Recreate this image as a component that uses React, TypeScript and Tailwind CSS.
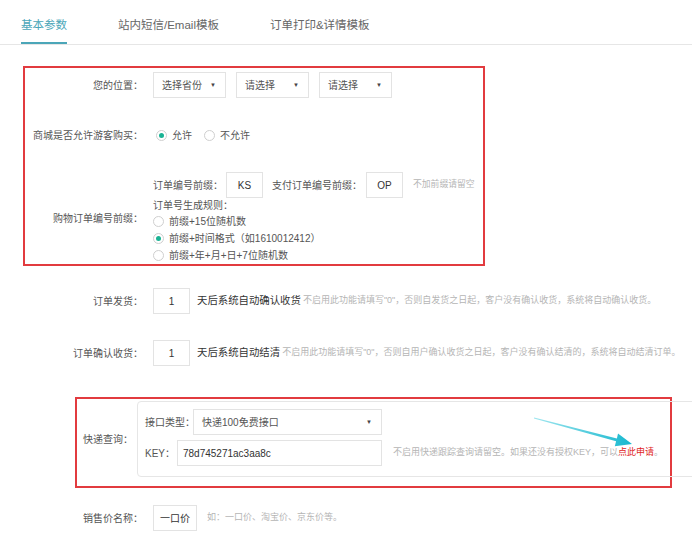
import React from 'react';

const FONT = "font-['Liberation_Sans','Noto_Sans_CJK_SC',sans-serif]";

function Select({ label, width }: { label: string; width: string }) {
  return (
    <div
      className={`${width} h-[26px] shrink-0 border border-[#e3e3e3] bg-white flex items-center justify-between pl-[8px] pr-[9px] text-[10px] text-[#555]`}
    >
      <span>{label}</span>
      <span className="text-[6px] text-[#444]">▼</span>
    </div>
  );
}

function Radio({ checked, label, gap = 'ml-[5px]' }: { checked?: boolean; label: string; gap?: string }) {
  return (
    <div className="flex items-center">
      <span className="w-[11px] h-[11px] rounded-full border border-[#cfcfcf] bg-white flex items-center justify-center">
        {checked && <span className="w-[5px] h-[5px] rounded-full bg-[#1ab394]" />}
      </span>
      <span className={`${gap} text-[10px] text-[#555]`}>{label}</span>
    </div>
  );
}

function Box({ value, width, left }: { value: string; width: string; left?: boolean }) {
  return (
    <div
      className={`${width} h-[26px] shrink-0 border border-[#e3e3e3] bg-white flex items-center ${
        left ? 'pl-[5px]' : 'justify-center'
      } text-[10px] text-[#333]`}
    >
      {value}
    </div>
  );
}

export default function App() {
  const tabs = ['基本参数', '站内短信/Email模板', '订单打印&详情模板'];

  return (
    <div className={`${FONT} relative w-[692px] h-[541px] overflow-hidden bg-white`}>
      {/* tabs */}
      <div className="flex h-[45px] border-b border-[#e6e6e6] pl-[21px] gap-[51px]">
        {tabs.map((t, i) => (
          <div
            key={t}
            className={`h-[44px] pt-[16px] text-[11.5px] leading-[18px] ${
              i === 0 ? 'text-[#4ba6b8] border-b-2 border-[#4ba6b8]' : 'text-[#666]'
            }`}
          >
            {t}
          </div>
        ))}
      </div>

      {/* box 1 */}
      <div className="mt-[21px] ml-[23px] w-[462px] h-[200px] border-2 border-[#e23b3f]">
        <div className="mt-[4px] flex items-center h-[26px]">
          <div className="w-[118px] text-right text-[10px] text-[#555]">您的位置：</div>
          <div className="ml-[10px] flex gap-[10px]">
            <Select label="选择省份" width="w-[73px]" />
            <Select label="请选择" width="w-[73px]" />
            <Select label="请选择" width="w-[73px]" />
          </div>
        </div>

        <div className="mt-[24px] flex items-center h-[26px]">
          <div className="w-[118px] text-right text-[10px] text-[#555]">商城是否允许游客购买：</div>
          <div className="ml-[13px] flex items-center gap-[12px]">
            <Radio checked label="允许" />
            <Radio label="不允许" />
          </div>
        </div>

        <div className="mt-[24px] flex items-center">
          <div className="w-[118px] text-right text-[10px] text-[#555]">购物订单编号前缀：</div>
          <div className="ml-[10px] flex flex-col">
            <div className="flex items-center h-[26px]">
              <span className="w-[73px] text-[10px] text-[#555]">订单编号前缀：</span>
              <Box value="KS" width="w-[37px]" />
              <span className="ml-[9px] w-[94px] text-[10px] text-[#555]">支付订单编号前缀：</span>
              <Box value="OP" width="w-[37px]" />
              <span className="ml-[10px] text-[8.8px] text-[#b5b5b5]">不加前缀请留空</span>
            </div>
            <div className="h-[15px] leading-[15px] text-[10px] text-[#555]">订单号生成规则：</div>
            <div className="h-[17px] flex items-center">
              <Radio label="前缀+15位随机数" />
            </div>
            <div className="h-[17px] flex items-center">
              <Radio checked label="前缀+时间格式（如1610012412）" />
            </div>
            <div className="h-[17px] flex items-center">
              <Radio label="前缀+年+月+日+7位随机数" />
            </div>
          </div>
        </div>
      </div>

      {/* auto receive */}
      <div className="mt-[22px] flex items-center h-[26px]">
        <div className="w-[143px] text-right text-[10px] text-[#555]">订单发货：</div>
        <div className="ml-[10px] flex items-center">
          <Box value="1" width="w-[37px]" />
          <span className="ml-[7px] text-[10.4px] text-[#333]">天后系统自动确认收货</span>
          <span className="ml-[2px] text-[9px] text-[#b5b5b5] whitespace-nowrap">
            不启用此功能请填写"0"，否则自发货之日起，客户没有确认收货，系统将自动确认收货。
          </span>
        </div>
      </div>

      <div className="mt-[26px] flex items-center h-[26px]">
        <div className="w-[143px] text-right text-[10px] text-[#555]">订单确认收货：</div>
        <div className="ml-[10px] flex items-center">
          <Box value="1" width="w-[37px]" />
          <span className="ml-[7px] text-[10.4px] text-[#333]">天后系统自动结清</span>
          <span className="ml-[2px] text-[9px] text-[#b5b5b5] whitespace-nowrap">
            不启用此功能请填写"0"，否则自用户确认收货之日起，客户没有确认结清的，系统将自动结清订单。
          </span>
        </div>
      </div>

      {/* box 2 */}
      <div className="mt-[31px] ml-[75px] w-[597px] h-[91px] border-2 border-[#e23b3f] relative z-10">
        <div className="mt-[2px] flex items-center">
          <div className="w-[56px] shrink-0 whitespace-nowrap text-right text-[10px] text-[#555]">快递查询：</div>
          <div className="ml-[4px] w-[580px] shrink-0 h-[76px] border border-[#e6e6e6] rounded-[4px] pl-[7px] pt-[7px] -z-10 relative">
            <div className="flex items-center h-[26px]">
              <span className="w-[48px] shrink-0 text-[10px] text-[#555] whitespace-nowrap">接口类型：</span>
              <Select label="快递100免费接口" width="w-[189px]" />
            </div>
            <div className="mt-[5px] flex items-center h-[26px]">
              <span className="w-[32px] shrink-0 text-[10px] text-[#555] whitespace-nowrap">KEY：</span>
              <Box value="78d745271ac3aa8c" width="w-[205px]" left />
              <span className="ml-[11px] text-[9px] text-[#b5b5b5] whitespace-nowrap">
                不启用快递跟踪查询请留空。如果还没有授权KEY，可以
                <span className="text-[#e02424]">点此申请</span>。
              </span>
            </div>
          </div>
        </div>
      </div>

      {/* sale price name */}
      <div className="mt-[17px] flex items-center h-[26px]">
        <div className="w-[143px] text-right text-[10px] text-[#555]">销售价名称：</div>
        <div className="ml-[10px] flex items-center">
          <Box value="一口价" width="w-[44px]" />
          <span className="ml-[10px] text-[9px] text-[#b5b5b5]">如：一口价、淘宝价、京东价等。</span>
        </div>
      </div>

      {/* annotation arrow */}
      <svg
        className="absolute left-[527px] top-[410px] z-20"
        width="115"
        height="40"
        viewBox="0 0 115 40"
      >
        <defs>
          <linearGradient id="arr" x1="0" y1="0" x2="1" y2="0">
            <stop offset="0" stopColor="#9fe6ef" />
            <stop offset="1" stopColor="#17b8cf" />
          </linearGradient>
        </defs>
        <polygon
          points="7.1,7.5 89.9,28.45 91,23.6 105,34 87.8,36.2 89.1,31.35 6.9,8.5"
          fill="url(#arr)"
        />
      </svg>
    </div>
  );
}
